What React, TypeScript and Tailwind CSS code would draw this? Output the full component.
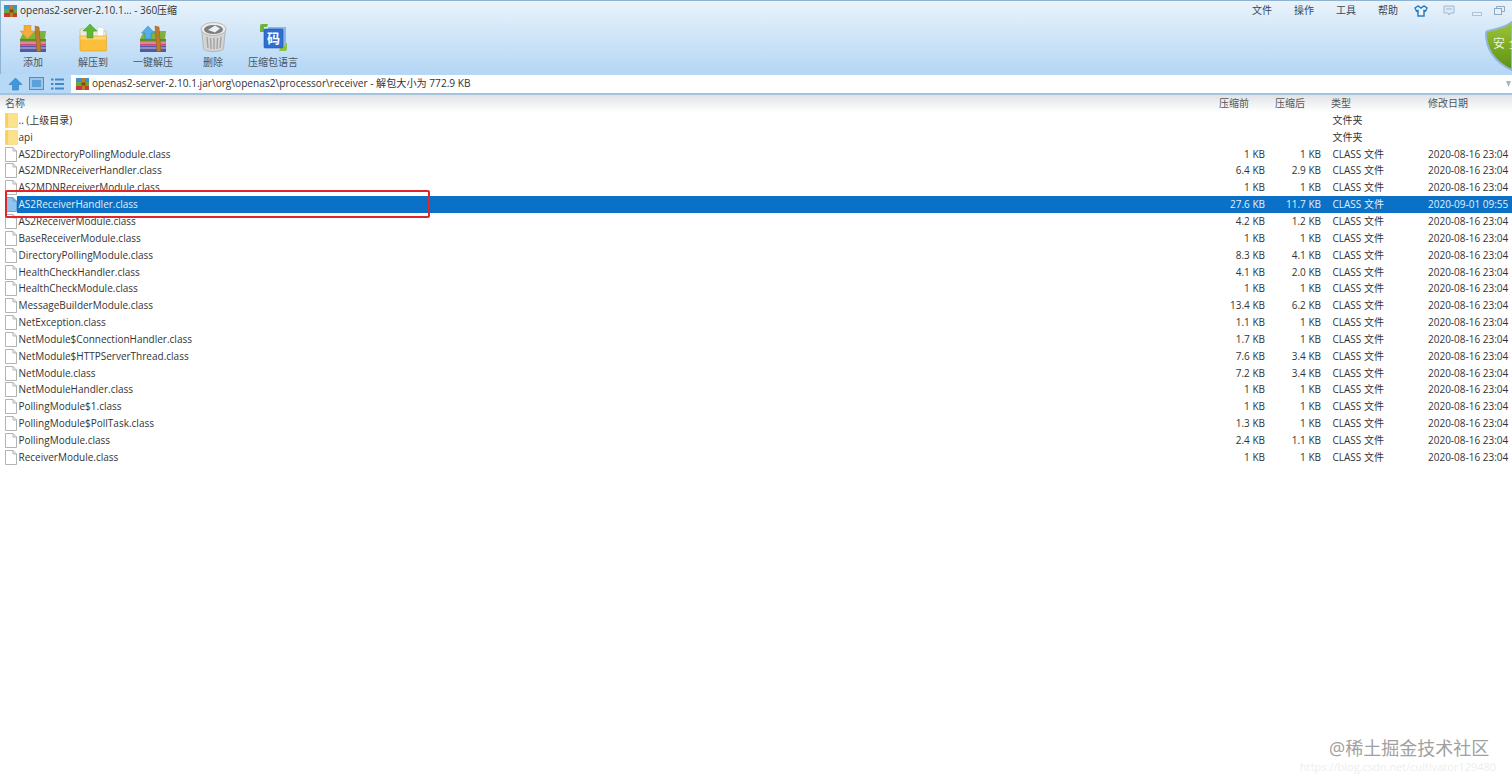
const files: [string, string, string, string, string?][] = [
  ['AS2DirectoryPollingModule.class', '1 KB', '1 KB', '2020-08-16 23:04'],
  ['AS2MDNReceiverHandler.class', '6.4 KB', '2.9 KB', '2020-08-16 23:04'],
  ['AS2MDNReceiverModule.class', '1 KB', '1 KB', '2020-08-16 23:04'],
  ['AS2ReceiverHandler.class', '27.6 KB', '11.7 KB', '2020-09-01 09:55', 'selected'],
  ['AS2ReceiverModule.class', '4.2 KB', '1.2 KB', '2020-08-16 23:04'],
  ['BaseReceiverModule.class', '1 KB', '1 KB', '2020-08-16 23:04'],
  ['DirectoryPollingModule.class', '8.3 KB', '4.1 KB', '2020-08-16 23:04'],
  ['HealthCheckHandler.class', '4.1 KB', '2.0 KB', '2020-08-16 23:04'],
  ['HealthCheckModule.class', '1 KB', '1 KB', '2020-08-16 23:04'],
  ['MessageBuilderModule.class', '13.4 KB', '6.2 KB', '2020-08-16 23:04'],
  ['NetException.class', '1.1 KB', '1 KB', '2020-08-16 23:04'],
  ['NetModule$ConnectionHandler.class', '1.7 KB', '1 KB', '2020-08-16 23:04'],
  ['NetModule$HTTPServerThread.class', '7.6 KB', '3.4 KB', '2020-08-16 23:04'],
  ['NetModule.class', '7.2 KB', '3.4 KB', '2020-08-16 23:04'],
  ['NetModuleHandler.class', '1 KB', '1 KB', '2020-08-16 23:04'],
  ['PollingModule$1.class', '1 KB', '1 KB', '2020-08-16 23:04'],
  ['PollingModule$PollTask.class', '1.3 KB', '1 KB', '2020-08-16 23:04'],
  ['PollingModule.class', '2.4 KB', '1.1 KB', '2020-08-16 23:04'],
  ['ReceiverModule.class', '1 KB', '1 KB', '2020-08-16 23:04'],
];

const cjk = 'font-["Open_Sans","Noto_Sans_CJK_SC",sans-serif]';

function FolderIcon() {
  return (
    <svg width="13" height="15" viewBox="0 0 13 15" className="shrink-0">
      <path d="M.5 .5h12v14H.5z" fill="#fde28c" stroke="#efd07a" strokeWidth="0.6" />
      <rect x="0.500" y="0.500" width="2.500" height="14" fill="#f9cf5f" />
    </svg>
  );
}

function FileIcon({ selected }: { selected?: boolean }) {
  const line = selected ? '#5b97c9' : '#a0a0a0';
  return (
    <svg width="12" height="15" viewBox="0 0 12 15" className="shrink-0">
      <path d="M.5 .5h7.500l3.500 3.500v10.500H.5z" fill={selected ? '#8fc4ee' : '#fff'} stroke={line} strokeWidth="0.8" />
      <path d="M8 .5V4h3.500" fill="none" stroke={line} strokeWidth="0.8" />
    </svg>
  );
}

// small version used in the title and address bars
function ArchiveSmall() {
  return (
    <svg width="13" height="12" viewBox="0 0 13 12" className="shrink-0">
      <rect y="0" width="13" height="4" fill="#3f8fd6" />
      <rect y="4" width="13" height="4" fill="#6aa83a" />
      <rect y="8" width="13" height="4" fill="#c23c3c" />
      <rect x="6" width="3" height="12" fill="#c17c26" />
      <rect x="5.500" y="4.500" width="4" height="3" fill="#7c4c12" />
    </svg>
  );
}

function Books({ arrow }: { arrow: 'down' | 'up' }) {
  return (
    <svg width="28" height="27" viewBox="0 0 28 27" className="shrink-0">
      <path d="M5 6h22l-1 8H1z" fill="#7fb23e" />
      <path d="M1 14h26v2.500H1z" fill="#5b8f2c" />
      <path d="M1 16.500h26V20.500H1z" fill="#d2486e" />
      <path d="M1 20.500h26V27H1z" fill="#4f5aa8" />
      <path d="M1 18h26M1 23h26" stroke="#efe6e0" strokeWidth="0.8" />
      <path d="M16 1l4 1 2 24-4 1z" fill="#bd7b2b" stroke="#96591a" strokeWidth="0.5" />
      {arrow === 'down' && <path d="M5 0h7v6h4l-7.500 8L1 6h4z" fill="#f4ac3a" stroke="#dc8f22" strokeWidth="0.5" />}
      {arrow === 'up' && <path d="M9 1l6.500 7H12v6H6V8H2.500z" fill="#56aee8" stroke="#2a83c6" strokeWidth="0.5" />}
    </svg>
  );
}

function ExtractIcon() {
  return (
    <svg width="28" height="28" viewBox="0 0 28 28" className="shrink-0">
      <path d="M1 5h5l2 2h19v7H1z" fill="#eceadc" stroke="#bcb38c" strokeWidth="0.6" />
      <path d="M19 3l6 1-1 9h-6z" fill="#fff" stroke="#ccc" strokeWidth="0.5" />
      <path d="M1 12h26.500v14a1 1 0 0 1-1 1H2a1 1 0 0 1-1-1z" fill="#fbbf3c" stroke="#dc9f25" strokeWidth="0.6" />
      <path d="M1.500 12.500h25.500v3H1.500z" fill="#fdd775" />
      <path d="M11 0l7 7h-4v7H8V7H4z" fill="#5cb836" stroke="#3f9322" strokeWidth="0.5" />
    </svg>
  );
}

function TrashIcon() {
  return (
    <svg width="27" height="30" viewBox="0 0 27 30" className="shrink-0">
      <path d="M1.500 7l2 19.500c.2 1.500 4.500 3 10 3s9.800-1.500 10-3l2-19.500z" fill="#d4d4d4" stroke="#9a9a9a" strokeWidth="0.6" />
      <ellipse cx="13.500" cy="7" rx="12.500" ry="6.500" fill="#ececec" stroke="#a6a6a6" strokeWidth="0.7" />
      <ellipse cx="13.500" cy="7.500" rx="9.500" ry="4.500" fill="#7d7e7e" />
      <path d="M8 8l7-4.500 5 3-5 4z" fill="#eaf2f8" />
      <path d="M7 15l1 11M10.500 16l.5 11M14 16v11M17.500 16l-.5 11M21 15l-1 11" stroke="#a0a0a0" strokeWidth="1.300" />
    </svg>
  );
}

function CodeIcon() {
  return (
    <svg width="29" height="29" viewBox="0 0 29 29" className="shrink-0">
      <path d="M1 9V3a2 2 0 0 1 2-2h6l-1 3H5v5z" fill="#6cb33f" />
      <path d="M28 20v6a2 2 0 0 1-2 2h-6l1-3h3v-5z" fill="#8cc63f" />
      <rect x="9" y="4" width="18" height="19" fill="#8db7ea" />
      <rect x="5" y="6" width="19" height="19" rx="1" fill="#2f6fd0" stroke="#1f55ab" strokeWidth="0.6" />
      <text x="14.500" y="20" fontSize="13" fontWeight="700" textAnchor="middle" fill="#fff" fontFamily="Noto Sans CJK SC, sans-serif">码</text>
    </svg>
  );
}

function Shield() {
  return (
    <svg width="27" height="50" viewBox="0 0 27 50" className="shrink-0">
      <defs>
        <linearGradient id="shieldFill" x1="0" y1="0" x2="0" y2="1">
          <stop offset="0" stopColor="#9ec43a" />
          <stop offset="0.6" stopColor="#76a61f" />
          <stop offset="1" stopColor="#5d8f16" />
        </linearGradient>
      </defs>
      <path d="M27 1C21 6 13 8 3 10c-1.500 .3-2 1.200-2 2.500C1 27 9 41 27 49z" fill="url(#shieldFill)" stroke="#8fb6d4" strokeWidth="2" />
    </svg>
  );
}

function ToolButton({ label, icon }: { label: string; icon: React.ReactNode }) {
  return (
    <div className="mt-[2px] flex w-[60px] flex-col items-center">
      <div className="flex h-[30px] items-end justify-center">{icon}</div>
      <span className="mt-[3px] text-[10px] leading-[14px] whitespace-nowrap text-[#4a5560]">{label}</span>
    </div>
  );
}

function Row({ name, before, after, type, date, selected, icon }: {
  name: string; before?: string; after?: string; type: string; date: string; selected?: boolean; icon: React.ReactNode;
}) {
  return (
    <div className="flex h-[16.85px] items-center pl-[5px] text-[10px] text-[#333]">
      <div className="flex w-[12px] shrink-0 items-center">{icon}</div>
      <div className={`flex h-full min-w-0 flex-1 items-center ${selected ? 'bg-[#0a71c6] text-[#e3f0fa]' : ''}`}>
        <span className="w-[1198px] shrink-0 pl-[1.500px] whitespace-nowrap">{name}</span>
        <span className="w-[50px] shrink-0 text-right">{before}</span>
        <span className="w-[56px] shrink-0 text-right">{after}</span>
        <span className="ml-[11.500px] w-[95.500px] shrink-0 whitespace-nowrap">{type}</span>
        <span className="whitespace-nowrap">{date}</span>
      </div>
    </div>
  );
}

export default function App() {
  return (
    <div className={`relative h-[781px] w-[1512px] overflow-hidden bg-white ${cjk}`}>
      <div className="h-[74px] border-t border-l border-[#8fb3d0] bg-gradient-to-b from-[#e9f3fb] to-[#b4d6f5]">
        <div className="flex h-[19px] items-center pl-[3px]">
          <ArchiveSmall />
          <span className="ml-[3px] text-[10px] text-[#333]">openas2-server-2.10.1... - 360压缩</span>
          <div className="ml-auto flex items-center pr-[5px] text-[10px] text-[#3c4650]">
            <span className="w-[42px]">文件</span>
            <span className="w-[42px]">操作</span>
            <span className="w-[42px]">工具</span>
            <span className="w-[36px]">帮助</span>
            <svg width="14" height="12" viewBox="0 0 14 12" className="mr-[15px]">
              <path d="M4 1L1 3l1.500 3L4 5.500V11h6V5.500l1.500.500L13 3l-3-2-3 2z" fill="#e9f4fc" stroke="#2a7fc4" strokeWidth="1.500" />
            </svg>
            <svg width="12" height="11" viewBox="0 0 12 11" className="mr-[17px]">
              <path d="M1 1h10v7H7l-1 2-1-2H1z" fill="#dcebf8" stroke="#9dbad2" />
              <path d="M3 4h6" stroke="#9dbad2" />
            </svg>
            <svg width="10" height="6" viewBox="0 0 10 6" className="mt-[7px] mr-[12px]">
              <rect x="0.500" y="1.500" width="9" height="3" fill="#e4f0fa" stroke="#a9c3d8" />
            </svg>
            <svg width="11" height="9" viewBox="0 0 11 9" className="mr-[2px]">
              <rect x="0.500" y="2.500" width="7" height="6" fill="#e4f0fa" stroke="#8ea9c0" />
              <path d="M2.500 2.500v-2h8v5H7.500" fill="none" stroke="#8ea9c0" />
            </svg>
          </div>
        </div>
        <div className="flex items-start pl-[2px]">
          <ToolButton label="添加" icon={<Books arrow="down" />} />
          <ToolButton label="解压到" icon={<ExtractIcon />} />
          <ToolButton label="一键解压" icon={<Books arrow="up" />} />
          <ToolButton label="删除" icon={<TrashIcon />} />
          <ToolButton label="压缩包语言" icon={<CodeIcon />} />
          <div className="ml-auto pt-[1px]">
            <div className="relative">
              <Shield />
              <span className="absolute top-[14px] left-[8px] text-[12px] tracking-[4px] whitespace-nowrap text-[#eef6dc]">安全</span>
            </div>
          </div>
        </div>
      </div>
      <div className="flex h-[21px] items-center border-b-[2px] border-[#a3c2dc] bg-[#b8d9f6] pl-[8px]">
        <svg width="15" height="14" viewBox="0 0 15 14" className="shrink-0">
          <path d="M7.500 1L14 7.500h-3.500V13h-6V7.500H1z" fill="#3f97dd" stroke="#2a7cc0" strokeWidth="0.6" />
        </svg>
        <svg width="15" height="13" viewBox="0 0 15 13" className="ml-[6px] shrink-0">
          <rect x="0.500" y="0.500" width="14" height="12" fill="#9cc6ea" stroke="#4b8fca" />
          <rect x="3" y="3" width="9" height="7" fill="#5d9fd8" />
        </svg>
        <svg width="13" height="12" viewBox="0 0 13 12" className="ml-[7px] shrink-0">
          <path d="M0 1.500h2.500M4 1.500h9M0 6h2.500M4 6h9M0 10.500h2.500M4 10.500h9" stroke="#3f89c9" strokeWidth="1.800" />
        </svg>
        <div className="ml-[7px] flex h-[18px] flex-1 items-center bg-white pl-[5px]">
          <ArchiveSmall />
          <span className="ml-[3px] text-[10.150px] whitespace-nowrap text-[#333]">
            openas2-server-2.10.1.jar\org\openas2\processor\receiver - 解包大小为 772.9 KB
          </span>
          <svg width="5" height="6" viewBox="0 0 5 6" className="mr-[1px] ml-auto">
            <path d="M0 0h5L2.500 6z" fill="#a8b4bd" />
          </svg>
        </div>
      </div>
      <div className="flex h-[17px] items-center bg-gradient-to-b from-[#e0e3e6] to-white text-[10px] text-[#555]">
        <span className="w-[1219px] pl-[5px]">名称</span>
        <span className="w-[56px]">压缩前</span>
        <span className="w-[56px]">压缩后</span>
        <span className="w-[97px]">类型</span>
        <span>修改日期</span>
      </div>
      <div>
        <Row name=".. (上级目录)" type="文件夹" date="" icon={<FolderIcon />} />
        <Row name="api" type="文件夹" date="" icon={<FolderIcon />} />
        {files.map(([name, before, after, date, sel]) => (
          <Row
            key={name}
            name={name}
            before={before}
            after={after}
            type="CLASS 文件"
            date={date}
            selected={sel === 'selected'}
            icon={<FileIcon selected={sel === 'selected'} />}
          />
        ))}
      </div>
      <div className="absolute top-[190px] left-[5px] h-[28px] w-[425px] rounded-[2px] border-2 border-[#e0252b]" />
      <div className="absolute top-[735px] left-[1329px] text-[18px] whitespace-nowrap text-[#a0a0a0]">@稀土掘金技术社区</div>
      <div className="absolute top-[759px] left-[1300px] text-[11px] whitespace-nowrap text-[#eeeeee]">https://blog.csdn.net/cultivator129480</div>
    </div>
  );
}
